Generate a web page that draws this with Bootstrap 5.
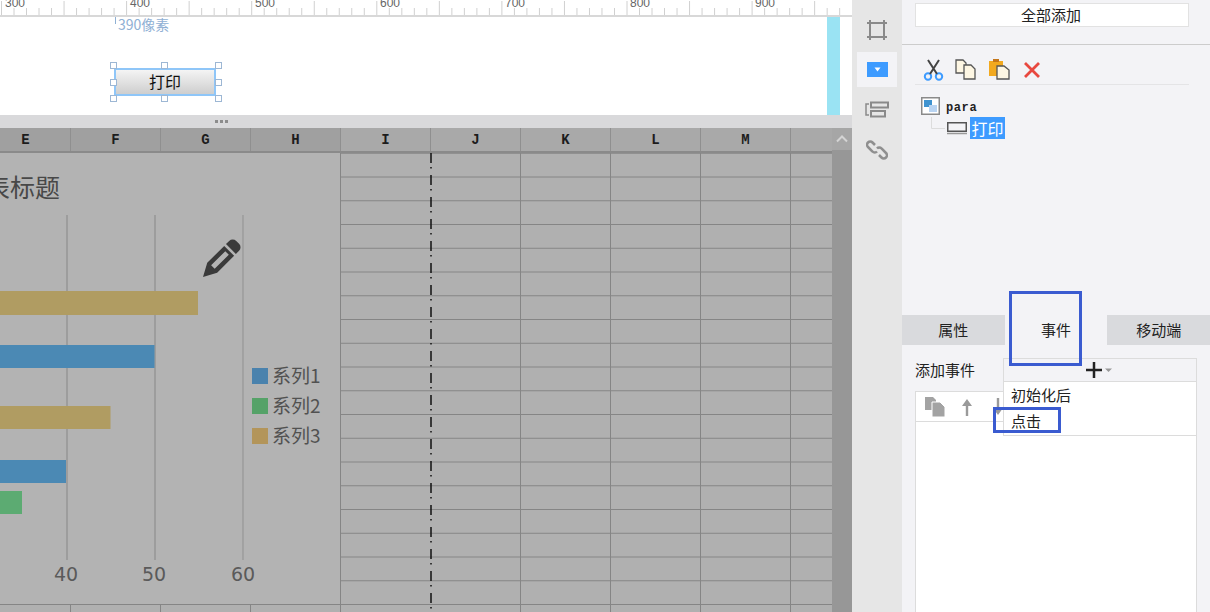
<!DOCTYPE html>
<html lang="zh-CN">
<head>
    <meta charset="UTF-8">
    <meta name="viewport" content="width=device-width, initial-scale=1.0">
    <title>打印</title>
    <link rel="stylesheet" href="https://cdn.jsdelivr.net/npm/bootstrap@5.3.0/dist/css/bootstrap.min.css">
    <style>
        body { font-family: "Noto Sans CJK SC", "Liberation Sans", sans-serif; font-size: 15px; color: #222; background: #f3f3f6; }
        .app-shell { width: 1210px; height: 612px; }

        /* left side: ruler, canvas, splitter, sheet */
        .work-col { width: 852px; }
        .ruler-bar { height: 17px; background: #fff; border-bottom: 2px solid #d8d8d8; }
        .ruler-bar svg { display: block; }
        .ruler-bar text { font: 12px "Liberation Sans", sans-serif; fill: #666; }
        .page-canvas { height: 98px; background: #fff; }
        .guide-bar { left: 827px; top: 0; width: 13px; height: 98px; background: #9ae3f3; }
        .guide-label { left: 118px; top: -3px; font-size: 14px; line-height: 20px; color: #8fb0d4; }
        .guide-tick { left: 115px; top: 0; width: 1px; height: 7px; background: #8fb0d4; }
        .print-btn { left: 114px; top: 51px; width: 102px; height: 28px; padding-bottom: 2px; border: 2px solid #8fc6f8; background: linear-gradient(#f4f4f4, #cecece); font-size: 16px; color: #111; }
        .grip { width: 7px; height: 7px; background: #fff; border: 1px solid #9db7d4; }
        .splitter { height: 13px; padding-left: 215px; background: #d9d9db; gap: 2px; }
        .splitter i { width: 3px; height: 3px; background: #8c8c8c; }

        .sheet-head { height: 25px; background: #a9a9a9; border-bottom: 2px solid #8a8a8a; font: bold 14px "Liberation Mono", monospace; color: #1c1c1c; }
        .head-cell { flex: 0 0 90px; border-right: 1px solid #8f8f8f; }
        .head-dim { background: #a0a0a0; }
        .head-first { margin-left: -19px; }
        .head-rest { flex: 1 1 0; min-width: 0; }
        .sheet-body { height: 459px; background-color: #b0b0b0; background-image: linear-gradient(to bottom, transparent 22.75px, #858585 22.75px); background-size: 100% 23.75px; background-position: 0 .75px; }
        .chart-area { flex: 0 0 341px; }
        .chart-area svg { display: block; }
        .chart-title { font-size: 25px; font-family: "Noto Sans CJK SC", sans-serif; fill: #484848; }
        .chart-legend { font-size: 19px; font-family: "Noto Sans CJK SC", sans-serif; fill: #515151; }
        .chart-axis { font-size: 19px; font-family: "DejaVu Sans", sans-serif; fill: #5a5a5a; }
        .grid-col { flex: 0 0 90px; border-right: 1px solid #858585; }
        .grid-col-dash { border-right: 0; }
        .dash-line { right: -1px; top: 0; }
        .scroll-rail { width: 20px; background: #979797; }
        .scroll-up { height: 22px; background: #a6a6a6; }

        /* icon strip */
        .icon-strip { width: 50px; background: #e6e6e6; padding-top: 12px; }
        .strip-btn { width: 40px; height: 35px; margin: 0 0 5px 5px; }
        .strip-btn-on { background: #f3f3f6; }

        /* right panel */
        .side-panel { width: 308px; background: #f3f3f6; }
        .add-all { margin: 3px 21px 0 13px; height: 24px; line-height: 20px; padding: 0 2px 0 0; font-size: 15px; color: #222; background: #fff; border: 1px solid #e2e2e2; border-radius: 0; }
        .side-rule { height: 18px; border-bottom: 1px solid #ccc; }
        .tool-row { height: 40px; margin: 0 21px 0 13px; padding: 10px 0 0 8px; gap: 11px; border-bottom: 1px solid #e4e4e6; }
        .tree-box { height: 230px; padding: 11px 0 0 19px; }
        .tree-para { font: bold 12px "Liberation Mono", monospace; color: #222; letter-spacing: .6px; gap: 6px; height: 20px; }
        .tree-leaf { margin-left: 10px; height: 22px; margin-top: 1px; }
        .tree-sel { background: #3d9bff; color: #fff; font-size: 16px; line-height: 22px; width: 35px; text-align: center; margin-left: 3px; }
        .tab-row { height: 30px; }
        .tab-item { flex: 1 1 0; background: #d9dadd; font-size: 15px; }
        .tab-on { background: #f3f3f6; }
        .event-head { height: 46px; padding: 13px 13px 0 13px; }
        .event-label { width: 88px; font-size: 15px; line-height: 24px; }
        .plus-box { height: 24px; background: #f3f3f6; border: 1px solid #dcdcdc; }
        .event-list { margin: 0 13px; height: 221px; background: #fff; border: 1px solid #dcdcdc; border-bottom: 0; }
        .event-tools { height: 30px; border-bottom: 1px solid #dcdcdc; padding-left: 9px; gap: 15px; background: #fff; }
        .event-menu { left: 101px; top: 381px; width: 194px; background: #fff; border: 1px solid #dcdcdc; border-radius: 0; padding: 0 0 1px; font-size: 15px; }
        .event-menu div { height: 26px; line-height: 26px; padding-left: 7px; }
        .mark-box { border: 3px solid #3a5bd0; }
        .mark-tab { left: 107px; top: 291px; width: 73px; height: 75px; }
        .mark-click { left: 91px; top: 407px; width: 68px; height: 26px; }
    </style>
</head>
<body class="overflow-hidden">
    <div class="app-shell d-flex">

        <!-- ruler, canvas and sheet -->
        <div class="work-col d-flex flex-column">
            <div class="ruler-bar"><svg id="ruler" width="852" height="15"></svg></div>

            <div class="page-canvas position-relative">
                <div class="guide-tick position-absolute"></div>
                <div class="guide-label position-absolute">390像素</div>
                <div class="print-btn position-absolute d-flex align-items-center justify-content-center">打印</div>
                <div class="grip position-absolute" style="left:110px;top:45px"></div>
                <div class="grip position-absolute" style="left:161px;top:45px"></div>
                <div class="grip position-absolute" style="left:215px;top:45px"></div>
                <div class="grip position-absolute" style="left:110px;top:62px"></div>
                <div class="grip position-absolute" style="left:215px;top:62px"></div>
                <div class="grip position-absolute" style="left:110px;top:78px"></div>
                <div class="grip position-absolute" style="left:161px;top:78px"></div>
                <div class="grip position-absolute" style="left:215px;top:78px"></div>
                <div class="guide-bar position-absolute"></div>
            </div>

            <div class="splitter d-flex align-items-center"><i></i><i></i><i></i></div>

            <div class="d-flex flex-grow-1 overflow-hidden">
                <div class="flex-grow-1 overflow-hidden">
                    <div class="sheet-head d-flex">
                        <div class="head-cell head-dim head-first d-flex align-items-center justify-content-center">E</div>
                        <div class="head-cell head-dim d-flex align-items-center justify-content-center">F</div>
                        <div class="head-cell head-dim d-flex align-items-center justify-content-center">G</div>
                        <div class="head-cell head-dim d-flex align-items-center justify-content-center">H</div>
                        <div class="head-cell d-flex align-items-center justify-content-center">I</div>
                        <div class="head-cell d-flex align-items-center justify-content-center">J</div>
                        <div class="head-cell d-flex align-items-center justify-content-center">K</div>
                        <div class="head-cell d-flex align-items-center justify-content-center">L</div>
                        <div class="head-cell d-flex align-items-center justify-content-center">M</div>
                        <div class="head-rest"></div>
                    </div>
                    <div class="sheet-body d-flex">
                        <div class="chart-area">
                            <svg width="341" height="459" viewBox="0 153 341 459">
                                <rect x="0" y="153" width="341" height="451" fill="#b3b3b3"/>
                                <path d="M70.5 604V612M160.5 604V612M250.5 604V612M340.5 153V612M0 604.5H341" stroke="#858585" fill="none"/>
                                <text class="chart-title" x="-15" y="197">表标题</text>
                                <path d="M67 215V560M155 215V560" stroke="#9d9d9d" stroke-width="2"/>
                                <path d="M243 215V560" stroke="#999" stroke-width="1.3"/>
                                <rect x="0" y="291" width="198" height="24" fill="#b09c62"/>
                                <rect x="0" y="345" width="154.500" height="23" fill="#4b89b4"/>
                                <rect x="0" y="406" width="110.500" height="23" fill="#b09c62"/>
                                <rect x="0" y="460" width="66" height="23" fill="#4b89b4"/>
                                <rect x="0" y="491" width="22" height="23" fill="#5cab72"/>
                                <g transform="translate(203,277) rotate(45)" fill="#3a3a3a">
                                    <path fill-rule="evenodd" d="M0 0L-7-13V-37H7V-13ZM-2.500-14V-34H2.500V-14Z"/>
                                    <path d="M-7-39.500H7V-44A5 5 0 0 0 2-49H-2A5 5 0 0 0-7-44Z"/>
                                </g>
                                <rect x="252" y="368" width="16" height="16" fill="#4a82ad"/>
                                <rect x="252" y="398" width="16" height="16" fill="#55a268"/>
                                <rect x="252" y="428" width="16" height="16" fill="#b3955a"/>
                                <text class="chart-legend" x="272" y="383">系列1</text>
                                <text class="chart-legend" x="272" y="413">系列2</text>
                                <text class="chart-legend" x="272" y="443">系列3</text>
                                <text class="chart-axis" x="66" y="581" text-anchor="middle">40</text>
                                <text class="chart-axis" x="154" y="581" text-anchor="middle">50</text>
                                <text class="chart-axis" x="243" y="581" text-anchor="middle">60</text>
                            </svg>
                        </div>
                        <div class="grid-col grid-col-dash position-relative">
                            <svg class="dash-line position-absolute" width="2" height="459"><line x1="1" y1="0" x2="1" y2="459" stroke="#111" stroke-width="1.500" stroke-dasharray="10 4 1.500 6.500"/></svg>
                        </div>
                        <div class="grid-col"></div>
                        <div class="grid-col"></div>
                        <div class="grid-col"></div>
                        <div class="grid-col"></div>
                    </div>
                </div>
                <div class="scroll-rail flex-shrink-0">
                    <div class="scroll-up d-flex align-items-center justify-content-center">
                        <svg width="14" height="10" viewBox="0 0 14 10"><path d="M2 7.500L7 2.500L12 7.500" fill="none" stroke="#d4d4d4" stroke-width="2"/></svg>
                    </div>
                </div>
            </div>
        </div>

        <!-- icon strip -->
        <div class="icon-strip flex-shrink-0 d-flex flex-column">
            <div class="strip-btn d-flex align-items-center justify-content-center">
                <svg width="20" height="20" viewBox="0 0 20 20"><path d="M3 0V20M17 0V20M0 3H20M0 17H20" fill="none" stroke="#8a8a8a" stroke-width="2"/></svg>
            </div>
            <div class="strip-btn strip-btn-on d-flex align-items-center justify-content-center">
                <svg width="21" height="15" viewBox="0 0 21 15"><rect width="21" height="15" fill="#3d9bff"/><path d="M7.500 5.500H13.500L10.500 9.500Z" fill="#fff"/></svg>
            </div>
            <div class="strip-btn d-flex align-items-center justify-content-center">
                <svg width="24" height="18" viewBox="0 0 24 18"><path d="M4 3H1V14H4" fill="none" stroke="#8a8a8a" stroke-width="1.500"/><rect x="6" y="1.500" width="17" height="5" fill="none" stroke="#8a8a8a" stroke-width="2"/><rect x="6" y="10" width="14" height="5.500" fill="none" stroke="#8a8a8a" stroke-width="2"/></svg>
            </div>
            <div class="strip-btn d-flex align-items-center justify-content-center">
                <svg width="22" height="22" viewBox="0 0 22 22"><g fill="none" stroke="#8f8f8f" stroke-width="2.500"><path d="M9 6L6.500 3.500A3 3 0 0 0 2 8L6.500 12.500A3 3 0 0 0 11 12.500"/><path d="M13 16L15.500 18.500A3 3 0 0 0 20 14L15.500 9.500A3 3 0 0 0 11 9.500"/></g></svg>
            </div>
        </div>

        <!-- right panel -->
        <div class="side-panel flex-shrink-0 position-relative">
            <button type="button" class="btn add-all d-block" style="width:274px">全部添加</button>
            <div class="side-rule"></div>
            <div class="tool-row d-flex align-items-center">
                <svg width="21" height="22" viewBox="0 0 21 22"><g fill="none"><circle cx="5" cy="17.500" r="3.200" stroke="#3d9bff" stroke-width="2"/><circle cx="16" cy="17.500" r="3.200" stroke="#3d9bff" stroke-width="2"/><path d="M7 15L16 1M14 15L5 1" stroke="#444" stroke-width="2"/></g></svg>
                <svg width="22" height="21" viewBox="0 0 22 21"><path d="M1 1H8L11 4V14H1Z" fill="#fdf6e3" stroke="#555" stroke-width="1.300"/><path d="M9 6H16L20 10V20H9Z" fill="#fdf6e3" stroke="#555" stroke-width="1.300"/></svg>
                <svg width="21" height="21" viewBox="0 0 21 21" style="margin-left:1px"><rect x="0" y="2" width="14" height="15" fill="#f2a91f"/><rect x="4" y="0" width="6" height="3" fill="#c4761a"/><path d="M8 7H15L20 11V20H8Z" fill="#fdf6e3" stroke="#555" stroke-width="1.300"/></svg>
                <svg width="18" height="18" viewBox="0 0 18 18" style="margin-left:2px"><path d="M2 2L16 16M16 2L2 16" stroke="#e8483f" stroke-width="2.800"/></svg>
            </div>
            <div class="tree-box">
                <div class="tree-para d-flex align-items-center">
                    <svg width="19" height="18" viewBox="0 0 19 18"><rect x=".75" y=".75" width="17.500" height="16.500" fill="#fff" stroke="#8a8a8a" stroke-width="1.500"/><rect x="3" y="3" width="8" height="7" fill="#3f93d0"/><rect x="8" y="8" width="8" height="7" fill="#b9d4f2"/></svg>
                    <span style="margin-top:3px">para</span>
                </div>
                <div class="tree-leaf d-flex align-items-center position-relative">
                    <svg width="26" height="22" viewBox="0 0 26 22" style="margin-left:-10px"><path d="M10.500 0V11.500H24" fill="none" stroke="#dcdcdc"/></svg>
                    <svg width="20" height="13" viewBox="0 0 20 13"><rect x=".75" y=".75" width="18.500" height="8.500" fill="#f3f3f6" stroke="#555" stroke-width="1.500"/><path d="M0 11.500H20" stroke="#999" stroke-width="1.500"/></svg>
                    <div class="tree-sel">打印</div>
                </div>
            </div>
            <div class="tab-row d-flex">
                <div class="tab-item d-flex align-items-center justify-content-center">属性</div>
                <div class="tab-item tab-on d-flex align-items-center justify-content-center">事件</div>
                <div class="tab-item d-flex align-items-center justify-content-center">移动端</div>
            </div>
            <div class="event-head d-flex">
                <div class="event-label">添加事件</div>
                <div class="plus-box flex-grow-1 d-flex align-items-center justify-content-center">
                    <svg width="30" height="20" viewBox="0 0 30 20"><path d="M9 2V18M1 10H17" stroke="#222" stroke-width="2.500"/><path d="M20 8.500H27L23.500 12Z" fill="#999"/></svg>
                </div>
            </div>
            <div class="event-list">
                <div class="event-tools d-flex align-items-center">
                    <svg width="21" height="20" viewBox="0 0 21 20"><path d="M0 0H8L11 3V13H0Z" fill="#a3a3a3"/><path d="M7 5H15L20 10V20H7Z" fill="#a3a3a3" stroke="#fff"/></svg>
                    <svg width="12" height="18" viewBox="0 0 12 18"><path d="M4.800 18V8H1L6 1L11 8H7.200V18Z" fill="#9a9a9a"/></svg>
                    <svg width="12" height="18" viewBox="0 0 12 18" style="margin-left:4px"><path d="M4.800 0V10H1L6 17L11 10H7.200V0Z" fill="#9a9a9a"/></svg>
                </div>
            </div>
            <div class="event-menu position-absolute">
                <div>初始化后</div>
                <div>点击</div>
            </div>
            <div class="mark-box mark-tab position-absolute"></div>
            <div class="mark-box mark-click position-absolute"></div>
        </div>
    </div>

    <script>
        // ruler ticks, one short tick every 12.5px and a long one every 62.5px
        const ruler = document.getElementById("ruler");
        let ticks = "";
        for (let i = 0; i < 68; i++) {
            const x = 1.5 + i * 12.51;
            const top = i % 5 === 0 ? 1 : 8;
            ticks += '<line x1="' + x + '" y1="' + top + '" x2="' + x + '" y2="15" stroke="#d0d0d0"/>';
        }
        for (let n = 0; n < 7; n++) {
            ticks += '<text x="' + (5 + n * 125) + '" y="7">' + (300 + n * 100) + '</text>';
        }
        ruler.innerHTML = ticks;
    </script>
    <script src="https://cdn.jsdelivr.net/npm/bootstrap@5.3.0/dist/js/bootstrap.bundle.min.js"></script>
</body>
</html>
